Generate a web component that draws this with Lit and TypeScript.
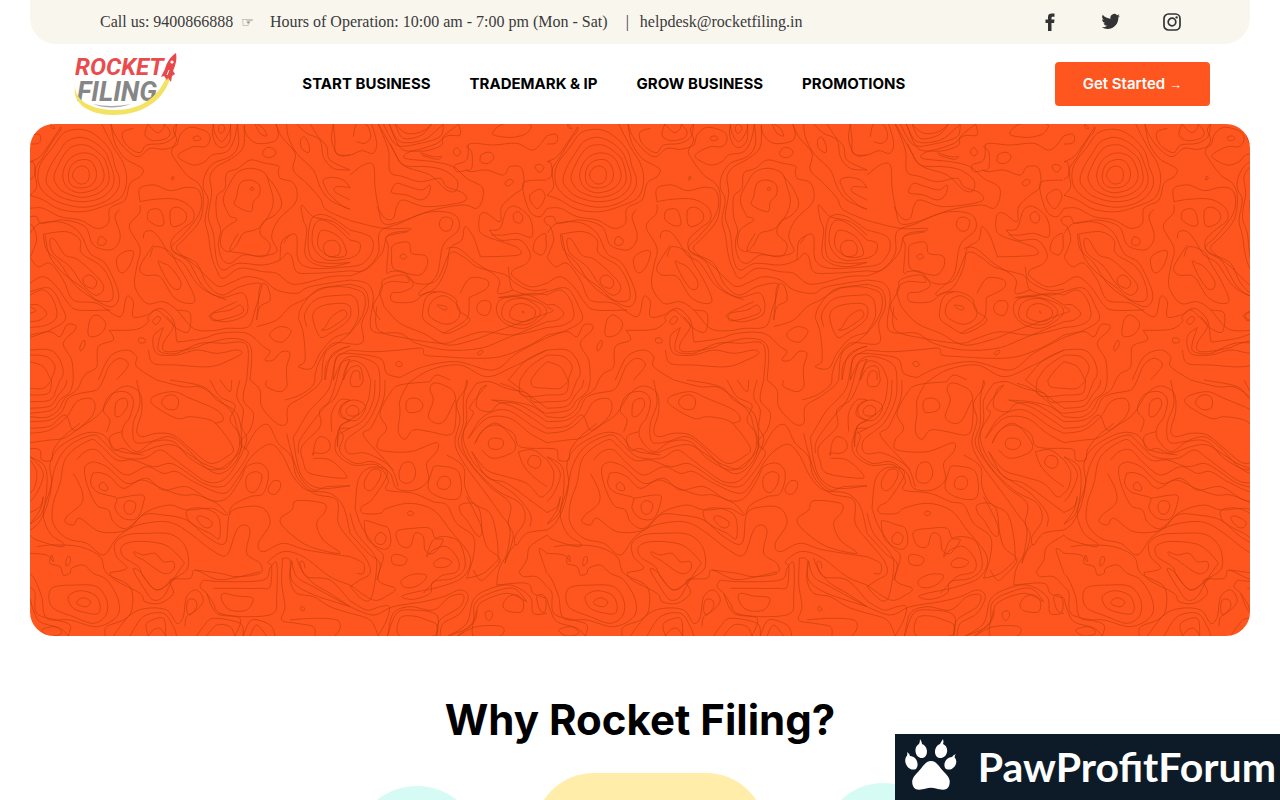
import { LitElement, html, css, svg } from "lit";
import { customElement } from "lit/decorators.js";

type Point = [number, number];
type Line = { pts: Point[]; closed: boolean };

/* Contour lines of the hero map. Each string is one line; a leading "o" closes it.
   Four sheets, drawn at three units per pixel. */
const NORTH_WEST = `
o128,170 135,148 155,138 175,148 177,175 165,190 145,190
o115,165 125,135 150,120 180,122 198,150 196,180 175,200 140,203 120,190
o98,165 112,125 140,103 175,100 205,118 222,160 215,190 190,210 145,218 110,200
o72,170 85,135 105,100 130,78 170,76 205,98 225,120 237,165 232,195 200,222 150,232 100,215 80,195
o48,180 60,140 85,100 110,65 150,52 190,65 225,95 240,130 252,170 245,205 210,235 150,245 90,230 60,205
o25,185 30,135 70,80 100,40 140,28 180,35 220,65 245,100 255,140 268,175 262,210 225,245 160,262 90,248 45,220
0,220 20,200 15,150 40,110 70,60 90,35 100,12
215,12 250,80 280,130 290,180 275,230 230,255 160,275 90,268 40,240 0,232
0,125 30,110 60,70 85,30
235,12 255,70 285,115 320,135 340,150 330,170 300,190 285,240 240,265 235,310 200,325 150,300 90,290 40,265 0,260
o62,12 75,25 65,24
0,45 25,42 32,55 25,70 0,72
0,180 15,165 12,130 0,125
250,12 258,50 290,90 325,110 360,85 400,88 440,75 450,45 480,22 530,35 540,60 525,80 490,80 450,100 448,115 490,135 525,125 545,105 590,95 612,60 615,12
310,25 280,35 280,60 300,85 330,98 350,75 400,70 432,50 440,12
345,12 345,45 370,62 410,55 420,35 410,12
362,12 370,30 385,38 400,25 395,12
o490,52 505,48 512,58 495,62
o428,168 433,175 425,180
545,12 548,45 560,75 580,82 600,60 605,12
555,12 555,40 575,65 598,35 598,12
565,20 575,12 585,25 575,40 567,35 565,20
440,12 430,30 440,60 425,90 430,110 470,165 505,190 520,230 510,300 465,355 440,380 450,400 500,440 540,480 570,500 610,485 650,470 700,480 740,510 800,520 840,500 960,480
630,12 625,75 600,110 550,130 525,165 520,205 535,240 525,300 535,345 545,410 560,450 580,475 630,445 700,455 740,460 780,490 820,490 900,470 960,465
640,12 640,80 605,115 560,140 540,170 545,220 535,290 550,340 560,420 580,450 625,430 700,435 750,420 770,400 785,410 800,455 850,460 960,455
645,20 650,45 680,70 730,65 745,45 735,12
675,12 690,40 710,48 700,25 680,12
o698,98 710,83 730,86 738,100 720,113 702,108
745,150 745,138 700,128 660,120 625,145 590,160 585,205 560,230 560,290 572,330 565,370 575,415 600,430 640,405 690,408 740,395 725,350 745,300 795,250 800,210 785,185 750,175 745,150
600,290 580,240 600,190 625,155 665,145 705,160 720,200 730,240 720,280 685,325 640,340 620,375 595,395 572,375 580,330 620,300 600,290
o662,275 615,255 620,230 630,190 660,180 688,195 688,225 670,245
o662,203 670,203 670,210 662,210
625,340 600,390 640,400 700,410 720,385 715,365 690,340 700,305 735,285 755,250 735,200 710,170
330,255 330,205 375,195 420,212 470,202 505,210 515,250 500,295 455,350 425,380 440,400 500,430 530,490 575,525 630,500 690,490 690,520 675,570 655,620 590,625 545,632 490,625 440,570 400,545 350,550 315,500 320,440 330,385 298,320 328,280 330,255
330,235 375,238 440,238 485,265 490,300 460,325 425,360 430,395 475,425 520,500 575,532 640,520 650,580 590,605 545,595 545,580 620,545
o352,290 360,270 390,270 402,310 385,318 360,305
o422,310 422,270 445,262 468,280 465,305 435,320
340,355 345,335 370,335 395,365 420,405 460,430 500,490 540,520 590,540
360,410 375,380 420,395 440,430 470,480 495,540 470,550 430,530 390,470 345,465 330,440 370,375
o385,425 400,430 420,440 450,480 450,505 430,505 405,470
o210,350 228,360 222,375 203,372
0,290 20,290 35,310 100,300 165,320 190,375 240,390 265,370 270,340 255,290 270,268
0,340 30,310 100,308 150,340 180,400 225,430 260,500 265,540 240,560 180,530 130,490 90,430 50,390 35,340
45,345 110,335 150,360 155,400 215,440 245,495 245,540 200,540 160,505 100,460 60,410 45,345
o60,360 75,360 105,405 145,420 210,480 220,510 195,525 155,490 120,440 70,400
o160,475 180,465 200,485 190,505 165,495
0,395 20,360 10,320 0,315
0,430 25,440 60,430 100,480 130,540 200,550 270,590 290,530 310,545 310,590 350,585 380,570 410,595 440,625 475,635 480,580 440,570
0,490 40,470 80,500 115,550 145,570 240,570
0,525 40,510 70,540 80,590 50,615 0,625
0,555 25,555 50,580 30,600 0,605
0,580 18,572 0,560
0,645 60,635 90,650 110,615 135,615 135,630 100,670 125,720 130,780
0,515 60,505 95,560 105,600 60,630 0,640
o265,450 260,415 285,395 310,395 300,435 280,458
o175,645 180,600 200,585 225,605 222,630 200,648
o327,655 342,655 345,667 328,668
o150,680 162,660 165,675 153,693
240,632 320,628 355,605 355,590 390,565 430,600 440,660 450,665 520,655 570,640 650,640 700,680 720,695 705,720 730,720 755,695 780,700 770,740 780,780
o368,605 380,590 392,595 380,613
235,630 250,660 205,680 200,740 170,760 150,780
410,590 430,620 400,670 410,695 490,685 530,670 600,655 650,665 665,700 660,780
405,615 385,670 390,695 440,700 510,670 580,670 650,675 650,780
355,690 370,730 440,735 540,740 600,720 635,700 620,690 560,700 500,690 440,705 380,700 370,650 395,630
o545,598 550,580 600,570 630,555 640,575 610,590 560,602
o720,640 750,620 783,632 760,665 730,660
0,690 60,690 90,720 100,760 90,780
0,705 50,710 75,740 65,780
0,725 40,740 60,780
205,780 240,710 290,690 320,710 320,740 380,780
225,780 240,735 270,715 295,735 260,780
o680,600 685,550 690,500 710,495 720,540 690,560
680,620 740,600 780,560 820,540 880,505 960,495
740,12 755,50 795,100 790,150 830,190 870,235 890,270 960,300
770,12 775,50 800,100 850,150 870,200 900,240 960,270
800,12 830,40 870,60 880,110 910,145 960,155
840,12 865,50 890,80 900,120 960,145
910,12 905,60 925,105 960,105
o812,60 825,52 838,80 835,98 815,85
960,190 940,180 905,172 880,180 885,200 900,225 940,260 960,265
960,215 920,200 915,215 960,240
960,345 910,305 850,290 815,255 820,300 830,330 825,400 850,430 900,440 960,430
960,330 900,290 860,285 840,310 835,380 850,420 900,430 960,425
960,415 890,420 850,380 850,325 870,300 910,315 960,360
o865,380 870,335 900,335 935,360 948,405 900,410
o880,385 890,365 915,362 930,380 925,405 895,408
760,370 780,345 800,350 805,420 850,445 960,440
750,420 755,365 780,345
805,610 815,560 860,510 920,500 960,505
830,620 825,580 865,535 960,520
o848,590 870,560 930,550 960,560 955,600 900,640 870,650
o885,622 905,590 940,570 948,590 900,625 875,630
805,580 820,640 825,720 805,740 845,745 870,700 910,655 960,640
870,780 885,700 930,665 960,660
885,780 905,705 960,675
905,780 920,715 960,690
920,780 935,730 960,705
935,780 945,750 960,730`;

const SOUTH_WEST = `
0,25 40,25 55,0
0,45 55,40 75,0
0,65 60,60 80,25 90,0
0,85 60,78 85,45 105,20 110,0
0,100 65,90 90,60 120,35 130,0
0,110 50,112 85,90 105,55 140,30 160,0
0,125 60,120 95,95 115,55 150,40 200,30 215,0
0,160 60,150 110,110 140,65 180,55 195,75 185,110 140,150 100,175 60,180 0,188
0,145 60,138 105,105 130,150 170,130 210,100 250,40 290,18 330,40 335,95 320,150 335,170 380,160 430,165 480,205 540,250 590,230 610,205 570,145 540,120 480,110 440,115 370,75 370,50 430,35 480,55 560,90 580,120 555,130
230,155 240,120 220,90 240,45 285,35 310,60 300,110 280,140 280,175 320,215 370,185 430,185 480,235 550,270 600,245 635,200 620,140 600,90 520,25 460,20 380,0
o255,95 260,65 285,55 293,75 275,105 258,110
o395,70 405,50 430,45 445,60 440,85 415,88
320,0 330,70 310,130 315,185 360,185 420,170 470,205 530,265 575,280 620,240 635,180 620,100 560,60 520,20 420,0
540,0 570,50 615,75 600,120 625,160 625,210 585,265 530,255 480,225 430,195 380,200 320,220 280,205 250,210 240,170 275,155
570,0 600,35 605,0
630,0 620,50 640,90 635,140 650,180 620,250 580,300 530,305 470,265 430,235 390,210 340,235 270,230 220,185 190,165 120,195 80,250 60,330 40,400 60,460 100,490 90,500 20,480 0,465
650,0 640,60 670,100 660,150 630,190 655,220 610,290 575,320 520,310 460,270 420,250 370,260 310,240 260,240 210,195 180,180 110,230 90,310 70,370 70,430 110,475 170,490 220,525 260,475 310,440 380,425 430,430 480,460 545,510 590,525 620,450 645,435 660,455 650,520 690,550 690,580 620,590 570,580 495,570
140,240 165,215 200,210 240,250 290,285 350,260 400,280 440,275 500,310 580,340 620,300 660,235 700,200 730,195 760,230 790,290 830,330 900,340 940,380 960,460
130,280 155,330 155,370 115,405 105,425 130,435 150,415 210,455 290,450 340,405 400,405 470,420 530,470 585,490 600,400 650,380 700,385 720,430 685,490 700,515 760,490 830,510 960,530
190,245 165,260 170,310 200,375 235,390 250,425 290,445 350,395 420,375 470,390 545,385 590,405 610,375 660,350 700,340 715,280 690,250 650,260 630,300 590,355 540,360 470,320 400,330 350,295 290,310 230,260 190,245
188,280 210,278 240,290 280,325 335,300 395,325 455,345 500,345 560,370 590,400
o208,315 220,307 232,320 230,332 212,328
188,280 182,310 200,335 230,345 260,355 255,385 280,415 320,415 340,370 335,345 260,355
o282,375 295,362 315,368 316,385 305,402 287,398
o472,390 520,385 565,410 568,475 540,460 500,440 475,420
o500,415 515,408 545,425 540,442 520,440
o650,325 650,290 675,275 695,285 690,315 670,338
o715,325 730,303 750,305 750,325 735,343 718,338
0,205 30,210 35,240 65,240 70,210 100,170 150,130
0,230 30,260 40,290 20,340 0,365
0,250 20,275 15,320 0,340
0,400 30,380 40,350 30,390 0,425
0,450 25,430 50,380 65,310 60,250 90,200 165,160 220,165 260,210 340,225
0,440 35,400 50,330 45,260 0,230
0,520 50,525 70,545 65,525 60,550 90,560 100,585 120,580 125,565 160,555 190,580 230,600 265,660 260,710 200,740 120,720 50,715 35,650 15,600 0,580
o110,535 120,530 120,548 108,557
20,500 70,495 150,500 210,530 230,580 300,620 305,690 280,720 230,740 225,768
o65,625 140,615 200,620 230,660 228,705 190,730 130,710 65,680
o115,650 150,632 195,645 210,675 205,700 175,700 130,685
o140,665 160,653 182,665 170,680 147,675
0,620 15,640 20,700 80,720 120,735 120,768
0,655 10,690 30,725 90,745 110,768
o35,750 75,740 95,760 60,768
240,575 290,565 260,530 255,490 290,465 350,460 420,462 460,490 475,530 470,570 430,600 400,650 370,660 345,630 310,570 330,575 380,630 440,590
o275,500 310,485 370,487 415,500 460,545 455,560 425,600 380,630 340,590 325,560 280,530
o312,515 340,525 375,520 400,545 430,545 430,570 400,580 340,540 320,530
240,580 255,600 330,640 345,665 390,670 430,640 420,600 480,595 495,570 560,598 620,592 690,575
250,768 300,705 350,685 410,690 440,730 460,710 470,650 500,630 520,660 500,690 470,710 465,740
300,768 340,710 400,700 430,740 440,768
345,768 350,730 400,715 415,768
365,768 370,750 390,745 400,768
o470,690 475,660 495,660 500,680 480,705
520,600 580,605 700,600 720,565 740,550 740,650 730,700 650,710 570,700 550,670 530,640 510,620 520,600
550,625 600,625 690,625 720,620 725,560 715,545 760,515 820,530 900,590 960,620
o575,660 580,640 620,648 668,655 650,690 600,690
530,640 560,700 630,715 620,768
500,768 520,740 550,715 630,730 635,768
530,768 560,735 600,740 610,768
645,768 665,720 720,735 735,768
660,768 680,735 710,768
755,535 755,610 765,680 755,720 800,730 850,740 855,768
760,535 780,540 780,600 800,640 850,650 900,680 960,700
780,720 850,715 920,720 930,745 915,768
o812,683 820,680 824,690 815,692
800,535 815,570 850,610 900,640 960,680
790,540 800,590 850,620 960,670
780,545 785,600 840,640 960,690
825,565 820,545 810,550 830,590 900,600 960,660
660,0 690,30 695,80 740,130 770,130 775,80 820,50 860,20 880,0
710,0 710,20 750,35 770,20 760,0
765,60 810,45 850,15 860,0
645,210 680,150 715,135 745,190 785,230 800,290 850,340 920,360 925,430 960,480
770,160 785,220 810,290 850,330 890,320 960,320
790,180 800,240 820,295 870,325 960,315
805,220 810,180 860,110 900,60 920,0
790,165 815,130 840,90 870,60 895,30 905,0
820,250 815,200 870,140 870,90 910,60 930,20 940,0
820,240 840,280 940,295 945,280 900,240 850,235
o850,225 855,190 870,170 895,180 900,205 880,220 850,218
905,155 905,100 930,60 960,45
960,75 935,80 935,105 960,115
o750,420 785,390 800,362 880,370 885,395 860,430 880,480 930,520 840,500 780,460
925,180 930,140 960,130
920,220 925,150 960,145`;

const NORTH_EAST = `
100,12 105,60 108,100 150,105 185,92 218,100 230,70 215,12
160,50 170,12 200,15 212,50 195,70 170,65
150,165 190,135 220,135 225,200 235,260 250,310 300,305 400,270 490,255 530,265 548,235 545,200 500,175 460,140 400,125 315,115 330,95 380,92 425,75 430,50 470,12
230,12 265,90 270,155 310,170 360,185 420,175 440,200 490,220 490,245 380,260 310,240 290,260 280,295 255,295 230,260
240,12 280,90 310,135 380,140 430,150 470,180 468,212 440,210 390,165 310,135 270,70
265,12 300,65 370,60 410,30 420,12
280,12 310,55 365,45 400,12
290,12 320,40 365,35 390,12
250,12 290,75 360,70 420,50 440,12
270,12 310,90 400,75 440,48 480,45 482,12
360,98 400,110 425,110 410,118 365,105
o275,210 290,190 320,198 365,210 390,195 385,225 360,240 320,225 280,220
o460,95 470,83 482,97 470,108
o540,120 545,103 570,97 582,113 565,130 545,128
o578,42 610,12 690,12 680,40 650,50 620,52
495,150 515,145 515,95 500,80 520,70 580,75 650,70 700,90 740,50
495,150 515,155 560,150 610,165 630,140 665,145 670,200 640,225 605,260 600,305 560,280 540,285 538,330 560,350 620,370 655,385 655,405 550,410 540,405 520,350 495,320 485,360 450,385 440,440 410,500 365,525 360,515 410,465 430,375 475,330 470,290 430,275 370,280 300,310 240,335 235,400 200,445 155,470
495,152 470,155 465,135 500,120 505,75
o705,140 718,133 732,143 718,157
o615,190 628,178 640,185 625,198
735,180 675,185 670,215 690,275 720,290 741,270
o690,225 720,208 735,230 715,265 695,250
o640,285 655,275 668,290 662,308 645,305
570,330 600,325 620,270 650,260 690,295 695,350 650,340 610,345 575,345
565,330 600,360 660,360 690,400 680,430 640,450 640,470 690,500 741,490
595,445 625,470 640,510 700,525 741,515
625,440 635,480 690,510 741,508
o700,380 710,355 735,340 738,360 738,385 725,405 703,395
440,385 475,385 530,430 595,475 595,520 640,510
o418,315 425,295 445,292 458,305 450,330 430,332
155,305 250,325 325,325 325,332 265,345 245,400 195,450 150,450
280,455 260,455 265,380 260,350 325,335
o275,405 280,375 325,367 335,400 370,405 382,415 380,440 360,465 320,460 280,445
o300,408 312,402 320,412 307,417
150,360 180,370 175,400 150,415
150,330 210,350 218,390 190,430 150,440
260,455 310,455 350,490 410,480 450,400 490,410 530,440 590,470
150,480 200,490 220,530 215,630 300,640 350,670 440,690 540,685 620,655 741,605
150,490 195,510 205,560 185,610 185,670 100,670 60,720 40,748
240,600 220,560 245,510 250,480 310,465 340,495 310,515 275,520 280,545 340,545 375,520 410,515
245,560 240,510 270,485 325,487 320,470
260,560 300,610 370,640 440,675 520,660 600,630 741,580
230,560 235,630 320,655 430,670 480,655 550,635 640,645 741,620
o368,575 380,530 420,515 465,535 475,570 510,600 470,630 435,640 400,620 372,600
o385,570 400,540 435,528 475,560 475,595 440,613 395,595
o412,555 438,560 438,570 425,567
505,535 505,585 485,610 430,640
480,520 510,475 560,480 560,505 510,530
o530,565 540,545 565,543 573,560 562,585 540,582
o590,575 600,540 650,530 720,550 740,575 720,600 670,625 615,610
o605,575 620,545 665,535 700,550 722,575 700,605 660,615 615,600
o630,575 645,555 675,552 705,570 700,595 670,605 635,595
o667,574 672,576 670,580
590,520 640,530 700,520 741,525
600,545 680,525 741,555
o532,700 545,690 548,697 538,705
75,780 80,730 120,690 150,682
95,780 110,710 150,700
105,780 130,720 175,710 230,735 240,780
120,780 150,725 190,735 215,780
140,780 150,745 180,740 190,780
150,780 160,755 178,755 180,780
150,690 220,695 300,690 365,685 375,705 430,710 520,715 600,710 680,680 741,645
150,700 240,715 260,760 300,780
o287,730 298,724 307,735 295,740
300,765 370,740 470,725 580,750 650,700 741,665
330,780 390,750 480,735 560,770 640,740 741,690
380,780 410,765 450,780
620,780 680,720 741,690
660,780 690,740 741,705
700,780 715,750 741,725
741,290 732,300 741,315
150,620 180,600 195,560 190,520 150,500
150,635 175,590 170,540 150,528`;

const SOUTH_EAST = `
150,0 155,18 180,18 190,0
210,0 205,60 180,100 120,140 130,170 120,215 165,250 220,245 270,280 290,325 345,330 385,300 380,250 410,215 408,188 330,215 240,210 235,180 260,145 240,100 270,40 300,15 400,10
225,0 220,60 190,120 140,150 110,170 110,220 160,255 230,255 265,300 260,330 340,340 400,365 440,375 470,430 520,470 520,530 500,590
o117,95 130,70 165,60 195,75 190,100 165,122 125,112
o138,92 155,76 175,85 172,105 148,107
240,0 235,60 200,130 140,180 145,220 200,220 270,260 295,320
255,0 250,60 215,140 190,165 250,235 280,270
o318,75 325,58 350,55 368,72 360,92 325,97
320,20 300,60 300,100 295,155 315,178 340,150 390,155 445,165 465,140 465,45 430,15 400,10 390,30 400,60 385,110 410,130 435,120 465,60
490,0 500,20 470,70 480,120 465,190 495,255 550,330 600,400 630,450 610,550
510,0 490,60 490,130 475,190 510,250 570,320 630,370 625,430 640,470 620,550
530,0 500,60 500,120 485,190 520,260 590,330 660,370 675,420 645,470 650,495 680,460 741,450
550,10 510,80 520,100 490,160 505,220 550,280 640,340 690,400 690,440
570,20 540,30 530,80 570,95 600,70 660,75 741,125
580,60 640,80 690,110 741,145
570,60 640,65 700,80 741,110
600,10 650,30 720,90 741,100
630,0 680,40 741,85
530,20 570,5 620,25 680,40 700,65 741,65
660,0 660,40 690,50 741,45
685,0 700,20 741,25
500,170 550,110 620,90 700,140 741,160
510,180 560,115 630,115 690,160 741,188
520,190 550,150 590,135 640,160 660,200 741,205
530,190 545,155 590,130 640,180 640,215 580,235 545,210
o565,190 575,175 605,178 610,195 595,208 572,205
520,210 560,270 620,290 680,310 720,350 741,340
510,220 560,290 620,310 690,360 741,395
655,215 700,210 741,230
655,215 670,255 700,290 741,320
o683,245 695,227 718,232 722,252 710,265 690,258
440,225 490,260 495,320 520,370 570,400 590,470 600,540
o195,300 215,270 240,270 240,295 215,330 195,325
165,380 175,300 205,265 250,265 260,290 215,360 185,380 190,400 240,400 260,385 330,370 400,390 450,450 510,530 490,590 420,620 330,640 305,650 340,658 390,640 400,605 460,595 495,560 480,490 440,470 400,480 380,530 400,510 440,500 475,540 470,575 420,590 370,640
o298,275 310,250 335,248 347,275 340,300 320,310 300,300
400,260 420,258 475,275 480,350 430,355 385,325 400,260
o412,308 425,290 445,292 452,310 440,327 418,325
o480,375 520,370 540,395 545,460 530,465 500,420 483,400
o322,400 330,393 342,400 330,407
165,390 185,440 225,500 250,530 235,600 285,625 265,645 220,660 150,610
o193,430 200,422 240,435 265,445 272,490 250,508 205,480
o225,475 240,457 258,470 250,492 230,490
o290,455 340,445 390,445 405,475 430,480 400,520 375,510 370,470 345,460 330,500 300,495
o275,530 290,523 320,535 310,555 280,552
o402,548 420,535 435,535 455,545 440,560 410,562
o305,600 340,583 378,585 370,605 340,622 310,620
150,400 170,460 220,520 230,560 215,650 190,660 150,640
150,460 205,520 240,550 230,600
150,480 200,540 210,580 180,600 150,600
150,530 190,550 190,580 170,580
150,665 200,690 240,680 268,680 260,720 240,768
150,680 220,705 280,680 370,665 430,650 480,630 505,650 480,700 430,730 420,768
150,700 210,720 230,768
255,768 280,700 330,680 400,690 450,650 490,645 480,680 420,720 410,768
270,768 290,700 340,690 410,705 410,768
o300,715 340,708 380,720 410,735 400,768 300,768
440,768 500,730 520,660 560,630 630,615 690,650 700,700 741,700
450,768 515,735 525,670 570,640 640,625 680,650
465,768 525,720 540,670 620,640 680,680
480,768 530,740 605,740 600,768 520,768 530,690
o610,670 625,650 650,645 670,665 665,695 630,695 612,685
o555,700 570,692 578,705 565,722
o710,650 730,645 738,665 735,695 720,690
520,570 540,600 560,590 600,540 560,500 540,430 500,350
500,600 550,580 590,540
580,610 600,560 640,500 650,495
660,580 680,540 690,500 741,465
600,620 680,610 700,640 741,655
655,570 670,590 710,590 741,620
741,520 720,505 720,520 741,580`;

const TILE = 517;

const parseSheet = (sheet: string, dx: number, dy: number): Line[] =>
  sheet
    .trim()
    .split("\n")
    .map((line) => ({
      closed: line.startsWith("o"),
      pts: line
        .replace("o", "")
        .trim()
        .split(" ")
        .map((p): Point => {
          const [x, y] = p.split(",").map(Number);
          return [x / 3 + dx, y / 3 + dy];
        }),
    }));

/* Loose ends that almost meet, also across the tile's side edges, are drawn together. */
function joinEnds(lines: Line[], reach: number) {
  const ends = lines
    .filter((l) => !l.closed)
    .flatMap((l, id) => [
      { p: l.pts[0], id },
      { p: l.pts[l.pts.length - 1], id },
    ]);
  const pairs: { i: number; j: number; dx: number; dy: number; d: number }[] = [];
  for (let i = 0; i < ends.length; i++) {
    for (let j = i + 1; j < ends.length; j++) {
      if (ends[i].id === ends[j].id) continue;
      let dx = ends[j].p[0] - ends[i].p[0];
      dx -= Math.round(dx / TILE) * TILE;
      const dy = ends[j].p[1] - ends[i].p[1];
      const d = Math.hypot(dx * 2, dy);
      if (d < reach) pairs.push({ i, j, dx, dy, d });
    }
  }
  const used = new Set<number>();
  for (const { i, j, dx, dy } of pairs.sort((a, b) => a.d - b.d)) {
    if (used.has(i) || used.has(j)) continue;
    used.add(i).add(j);
    ends[i].p[0] += dx / 2;
    ends[i].p[1] += dy / 2;
    ends[j].p[0] -= dx / 2;
    ends[j].p[1] -= dy / 2;
  }
}

/* Catmull-Rom spline through the points, written as cubic segments. */
function smooth({ pts, closed }: Line): string {
  const n = pts.length;
  const at = (i: number): Point =>
    closed ? pts[(i + n) % n] : pts[Math.max(0, Math.min(n - 1, i))];
  let d = `M${pts[0][0].toFixed(1)} ${pts[0][1].toFixed(1)}`;
  const last = closed ? n : n - 1;
  for (let i = 0; i < last; i++) {
    const [a, b, c, e] = [at(i - 1), at(i), at(i + 1), at(i + 2)];
    const q = [
      b[0] + (c[0] - a[0]) / 6, b[1] + (c[1] - a[1]) / 6,
      c[0] - (e[0] - b[0]) / 6, c[1] - (e[1] - b[1]) / 6,
      c[0], c[1],
    ];
    d += `C${q.map((v) => v.toFixed(1)).join(" ")}`;
  }
  return closed ? d + "Z" : d;
}

const LINES = [
  ...parseSheet(NORTH_WEST, 0, -4),
  ...parseSheet(SOUTH_WEST, 0, 256),
  ...parseSheet(NORTH_EAST, 270, -4),
  ...parseSheet(SOUTH_EAST, 270, 256),
];
joinEnds(LINES, 14);
const CONTOURS = LINES.map(smooth).join("");

@customElement("topo-map")
export class TopoMap extends LitElement {
  static styles = css`
    :host { display: block; }
    .map { display: block; width: 100%; height: 100%; }
    .line { fill: none; stroke: #c43a08; stroke-width: 0.65; }
  `;
  render() {
    return html`<svg class="map" aria-hidden="true">
      <defs>
        <pattern id="topo" width=${TILE} height=${TILE} patternUnits="userSpaceOnUse">
          ${svg`<path class="line" d=${CONTOURS} />`}
        </pattern>
      </defs>
      <rect width="100%" height="100%" fill="url(#topo)" />
    </svg>`;
  }
}

@customElement("brand-logo")
export class BrandLogo extends LitElement {
  static styles = css`
    :host { display: block; }
    .logo { display: block; overflow: visible; }
    .word { font-family: "Liberation Sans Narrow", Roboto, sans-serif; font-weight: 700; font-style: italic; }
    .rocket { font-size: 24px; fill: #ea4b4d; }
    .filing { font-size: 27px; fill: #868686; }
  `;
  render() {
    return html`<svg class="logo" width="106" height="68" viewBox="0 0 106 68" role="img" aria-label="Rocket Filing">
      <text class="word rocket" x="2" y="25">ROCKET</text>
      <text class="word filing" x="4" y="51">FILING</text>
      <path d="M93 28C84 48 67 60 43 60C22 60 3 53 2 37C-1 54 17 65 40 65C67 65 89 53 97 29Z" fill="#f4e362" />
      <path d="M20 54Q38 61 58 54Q38 58 20 54Z" fill="#aaa" />
      <path d="M103 3C97 7 94 12 92 19L88 27L91 26L94 30L95 28L98 32L99 26L102 24L100 21C103 14 104 9 103 3Z" fill="#e8484c" />
      <circle cx="99" cy="12" r="1.6" fill="#fff" />
      <path d="M96 20L94 25" stroke="#fff" stroke-width="1" />
    </svg>`;
  }
}

const MENU = ["START BUSINESS", "TRADEMARK & IP", "GROW BUSINESS", "PROMOTIONS"];

@customElement("app-root")
export class AppRoot extends LitElement {
  static styles = css`
    :host {
      display: block;
      height: 100vh;
      overflow: hidden;
      background: #fff;
      color: #000;
      font-family: Inter, "Open Sans", sans-serif;
    }
    * { box-sizing: border-box; }
    a { color: inherit; text-decoration: none; }
    .topbar {
      display: flex;
      align-items: center;
      justify-content: space-between;
      height: 44px;
      margin: 0 30px;
      padding: 0 68px 0 70px;
      border-radius: 0 0 26px 26px;
      background: #f9f6ee;
      color: #3a3a3a;
      font: 16px/24px "Liberation Serif", serif;
    }
    .contact { display: flex; white-space: pre; }
    .hand { margin: 0 16px 0 8px; font-family: "DejaVu Sans", sans-serif; font-size: 14px; }
    .bar { margin: 0 11px 0 18px; }
    .social { display: flex; gap: 41px; }
    .social svg { display: block; width: 20px; height: 20px; fill: #333; }
    .header {
      display: flex;
      align-items: center;
      justify-content: space-between;
      height: 80px;
      padding: 0 70px 0 73px;
    }
    .menu { display: flex; gap: 39px; margin-right: 26px; font-size: 15px; font-weight: 700; line-height: 20px; }
    .cta {
      height: 44px;
      padding: 0 28px;
      border: 0;
      border-radius: 4px;
      background: #ff551f;
      color: #fff;
      font: 600 15px/20px Inter, sans-serif;
      cursor: pointer;
    }
    .arrow { font-family: "Liberation Sans", sans-serif; font-size: 13px; }
    .hero {
      display: grid;
      height: 64vh;
      margin: 0 30px;
      border-radius: 24px;
      overflow: hidden;
      background: #ff551f;
    }
    .why { padding-top: 60px; }
    .title { margin: 0; text-align: center; font-size: 42px; line-height: 48px; font-weight: 700; }
    .cards {
      display: grid;
      grid-template-columns: repeat(3, 233px);
      justify-content: center;
      justify-items: center;
      padding: 29px 0 0 20px;
    }
    .disc { width: 128px; height: 128px; margin-top: 13px; border-radius: 50%; background: #d6fbf5; }
    .disc.late { width: 120px; height: 120px; margin-top: 10px; }
    .pill { width: 232px; height: 160px; border-radius: 60px; background: #ffeda9; }
    .banner {
      position: fixed;
      right: 0;
      bottom: 0;
      display: flex;
      align-items: center;
      gap: 21px;
      height: 66px;
      padding: 0 4px 0 10px;
      background: #0c1b27;
      color: #fff;
      font: 700 41px/48px Lato, sans-serif;
    }
    .banner svg { display: block; width: 52px; height: 52px; margin-bottom: 4px; fill: #fff; }
  `;

  render() {
    return html`
      <div class="topbar">
        <div class="contact"><a href="#call">Call us: 9400866888</a><span class="hand">☞</span><span>Hours of Operation: 10:00 am - 7:00 pm (Mon - Sat)</span><span class="bar">|</span><a href="#mail">helpdesk@rocketfiling.in</a></div>
        <div class="social">
          <a href="#facebook" aria-label="Facebook"><svg viewBox="0 0 20 20"><path d="M8 19V11H5.500V7.500H8V5C8 2.400 9.500 1.500 11.700 1.500H14.500V4.700H12.700C11.800 4.700 11.500 5.100 11.500 5.900V7.500H14.500L14.100 11H11.500V19Z" /></svg></a>
          <a href="#twitter" aria-label="Twitter"><svg viewBox="-1 0 26 26"><path d="M23.600 4.900a9.700 9.700 0 0 1-2.800.8 4.900 4.900 0 0 0 2.100-2.700 9.700 9.700 0 0 1-3.100 1.200 4.900 4.900 0 0 0-8.400 4.500A13.900 13.900 0 0 1 1.300 3.600a4.900 4.900 0 0 0 1.500 6.500 4.900 4.900 0 0 1-2.200-.6 4.900 4.900 0 0 0 3.900 4.900 4.900 4.900 0 0 1-2.200.1 4.900 4.900 0 0 0 4.600 3.400A9.900 9.900 0 0 1 0 19.900a13.900 13.900 0 0 0 7.500 2.200c9.100 0 14.300-7.700 14-14.600a10 10 0 0 0 2.100-2.600z" /></svg></a>
          <a href="#instagram" aria-label="Instagram"><svg viewBox="0 0 20 20"><rect x="2" y="2" width="16" height="16" rx="4.500" fill="none" stroke="#333" stroke-width="1.700" /><circle cx="10" cy="10" r="3.800" fill="none" stroke="#333" stroke-width="1.700" /><circle cx="14.600" cy="5.400" r="1.200" /></svg></a>
        </div>
      </div>
      <header class="header">
        <a href="#home"><brand-logo></brand-logo></a>
        <nav class="menu">${MENU.map((m) => html`<a href="#menu">${m}</a>`)}</nav>
        <button class="cta">Get Started <span class="arrow">→</span></button>
      </header>
      <section class="hero"><topo-map></topo-map></section>
      <section class="why">
        <h2 class="title">Why Rocket Filing?</h2>
        <div class="cards">
          <div class="disc"></div>
          <div class="pill"></div>
          <div class="disc late"></div>
        </div>
      </section>
      <aside class="banner">
        <svg viewBox="0 0 52 52" aria-hidden="true">
          <path d="M26 22C32 22 34 28 39 33C44 38 46 41 44 47C42 52 36 51 31 49.500Q26 48 21 49.500C16 51 10 52 8 47C6 41 8 38 13 33C18 28 20 22 26 22Z" />
          <path d="M15 0Q17 3 17 5C23 7 24 17 18 19C10 20 8 8 14 5Q15 3 15 0Z" />
          <path d="M38 0Q36 3 35 5C29 7 28 17 34 19C43 20 45 8 38 5Q39 3 38 0Z" />
          <path d="M2 13Q5 15 5 17C11 17 15 25 11 30C4 33-2 24 1 18Q3 16 2 13Z" />
          <path d="M51 15Q48 16 47 18C41 18 37 26 41 30C48 33 54 24 50 19Q49 17 51 15Z" />
        </svg>
        <span>PawProfitForum</span>
      </aside>
    `;
  }
}
